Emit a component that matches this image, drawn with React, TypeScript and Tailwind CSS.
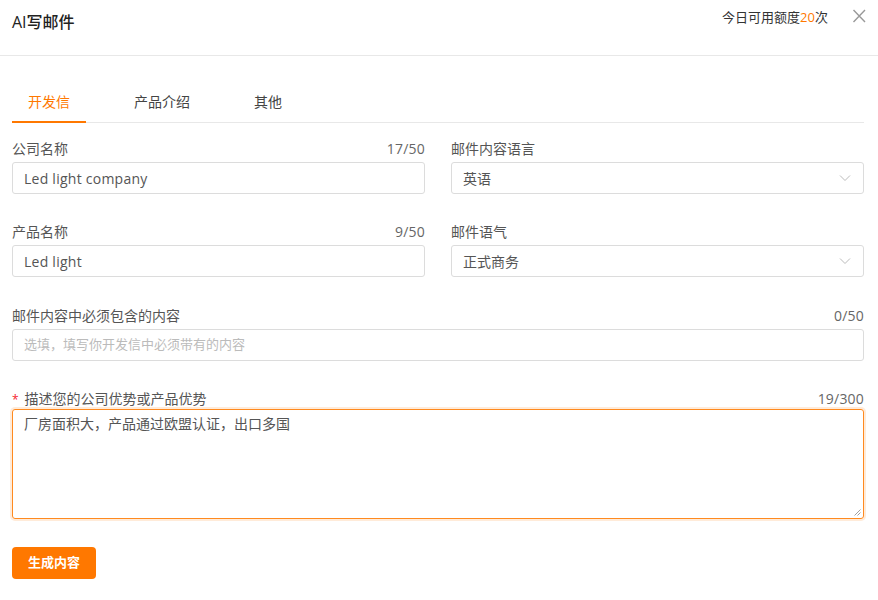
import React from "react";

const font = { fontFamily: "'Open Sans', 'Noto Sans CJK SC', sans-serif" };

function Label({ text, count, required }: { text: string; count?: string; required?: boolean }) {
  return (
    <div className="flex h-[20px] items-center justify-between text-[14px] leading-[20px] text-[#555]">
      <span>
        {required && <span className="mr-[6px] text-[12px] text-[#f5222d]">*</span>}
        {text}
      </span>
      {count && <span className="tracking-[0.2px] text-[#666]">{count}</span>}
    </div>
  );
}

function Input({ value, placeholder }: { value?: string; placeholder?: string }) {
  return (
    <div className="mt-[3px] flex h-[32px] items-center rounded-[3px] border border-[#dcdcdc] px-[11px]">
      {value ? (
        <span className="text-[14px] tracking-[0.25px] text-[#555]">{value}</span>
      ) : (
        <span className="text-[13px] text-[#bbb]">{placeholder}</span>
      )}
    </div>
  );
}

function Select({ value }: { value: string }) {
  return (
    <div className="mt-[3px] flex h-[32px] items-center justify-between rounded-[3px] border border-[#dcdcdc] pl-[11px] pr-[12px]">
      <span className="text-[14px] text-[#555]">{value}</span>
      <svg width="12" height="8" viewBox="0 0 12 8" fill="none">
        <path d="M1 1.5 L6 6.5 L11 1.5" stroke="#bbb" strokeWidth="1" />
      </svg>
    </div>
  );
}

export default function App() {
  return (
    <div className="h-[600px] w-[878px] bg-white" style={font}>
      <div className="flex h-[56px] items-start justify-between border-b border-[#e8e8e8] pl-3 pr-[12px]">
        <div className="mt-[11px] text-[16px] font-medium leading-[22px] text-[#222]">AI写邮件</div>
        <div className="flex items-start">
          <div className="mt-[7px] text-[13px] leading-[20px] text-[#333]">
            今日可用额度<span className="text-[#ff7800]">20</span>次
          </div>
          <svg className="ml-[24px] mt-[9px]" width="14" height="14" viewBox="0 0 14 14" fill="none">
            <path d="M1.5 1 L13 13 M13 1 L1.5 13" stroke="#999" strokeWidth="1.4" />
          </svg>
        </div>
      </div>

      <div className="pl-3 pr-[14px] pt-[27px]">
        <div className="flex h-[40px] gap-8 border-b border-[#e8e8e8]">
          <div className="-mb-px flex h-[40px] items-center border-b-2 border-[#ff7800] px-4 pb-px text-[14px] text-[#ff7800]">
            开发信
          </div>
          <div className="flex h-[40px] items-center px-4 pb-[3px] text-[14px] text-[#444]">产品介绍</div>
          <div className="flex h-[40px] items-center px-4 pb-[3px] text-[14px] text-[#444]">其他</div>
        </div>

        <div className="mt-[16px] grid grid-cols-2 gap-x-[26px]">
          <div>
            <Label text="公司名称" count="17/50" />
            <Input value="Led light company" />
          </div>
          <div>
            <Label text="邮件内容语言" />
            <Select value="英语" />
          </div>
        </div>

        <div className="mt-[28px] grid grid-cols-2 gap-x-[26px]">
          <div>
            <Label text="产品名称" count="9/50" />
            <Input value="Led light" />
          </div>
          <div>
            <Label text="邮件语气" />
            <Select value="正式商务" />
          </div>
        </div>

        <div className="mt-[29px]">
          <Label text="邮件内容中必须包含的内容" count="0/50" />
          <Input placeholder="选填，填写你开发信中必须带有的内容" />
        </div>

        <div className="mt-[28px]">
          <Label text="描述您的公司优势或产品优势" count="19/300" required />
          <div className="relative h-[110px] rounded-[3px] border border-[#ff8a1f] px-[11px] py-[4px] shadow-[0_0_0_2px_rgba(255,120,0,0.15)]">
            <div className="text-[14px] leading-[20px] text-[#555]">厂房面积大，产品通过欧盟认证，出口多国</div>
            <svg className="absolute bottom-[2px] right-[2px]" width="7" height="7" viewBox="0 0 7 7">
              <path d="M6.5 0.5 L0.5 6.5 M6.5 3.5 L3.5 6.5" stroke="#888" strokeWidth="0.8" />
            </svg>
          </div>
        </div>

        <button className="mt-[28px] flex h-[32px] w-[84px] items-center justify-center rounded-[4px] bg-[#ff7800] text-[13px] font-bold text-white">
          生成内容
        </button>
      </div>
    </div>
  );
}
